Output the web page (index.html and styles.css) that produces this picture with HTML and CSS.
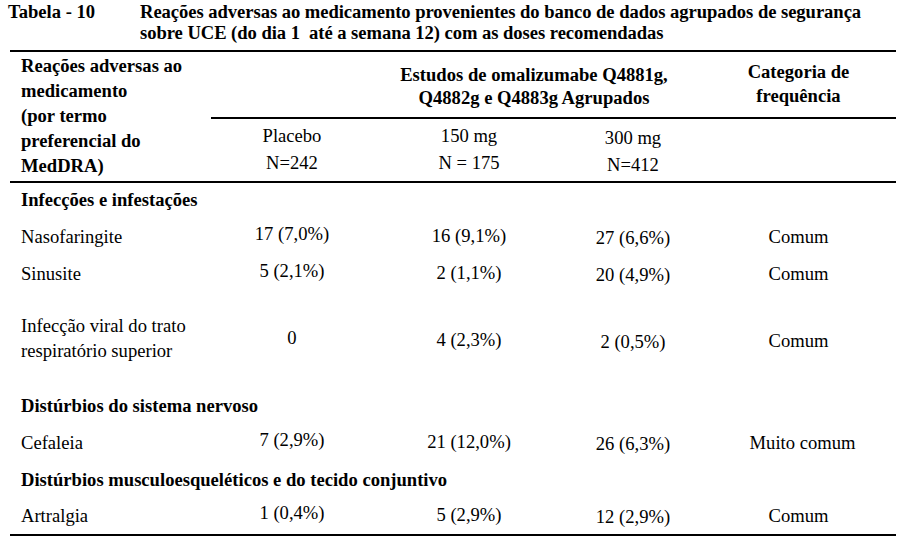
FILE: index.html
```html
<!DOCTYPE html>
<html lang="pt">
<head>
<meta charset="utf-8">
<title>Tabela 10</title>
<link rel="stylesheet" href="styles.css">
</head>
<body>
<div class="page">
  <div class="caption">
    <div class="cap-label">Tabela - 10</div>
    <div class="cap-text">Reações adversas ao medicamento provenientes do banco de dados agrupados de segurança<br>sobre UCE (do dia 1&nbsp; até a semana 12) com as doses recomendadas</div>
  </div>
  <div class="table">
    <div class="thead">
      <div class="h-term">Reações adversas ao<br>medicamento<br>(por termo<br>preferencial do<br>MedDRA)</div>
      <div class="h-studies">Estudos de omalizumabe Q4881g,<br>Q4882g e Q4883g Agrupados</div>
      <div class="h-cat">Categoria de<br>frequência</div>
      <div class="h-dose">Placebo<br>N=242</div>
      <div class="h-dose">150 mg<br>N = 175</div>
      <div class="h-dose h-low">300 mg<br>N=412</div>
      <div class="h-dose"></div>
    </div>
    <div class="tbody">
      <div class="sec sec-first">Infecções e infestações</div>
      <div class="row after-sec">
        <div class="lbl">Nasofaringite</div>
        <div class="v v2">17 (7,0%)</div>
        <div class="v v3">16 (9,1%)</div>
        <div class="v v4">27 (6,6%)</div>
        <div class="v v5">Comum</div>
      </div>
      <div class="row">
        <div class="lbl">Sinusite</div>
        <div class="v v2">5 (2,1%)</div>
        <div class="v v3">2 (1,1%)</div>
        <div class="v v4">20 (4,9%)</div>
        <div class="v v5">Comum</div>
      </div>
      <div class="row tall">
        <div class="lbl">Infecção viral do trato<br>respiratório superior</div>
        <div class="v v2">0</div>
        <div class="v v3">4 (2,3%)</div>
        <div class="v v4">2 (0,5%)</div>
        <div class="v v5">Comum</div>
      </div>
      <div class="sec sec-wide">Distúrbios do sistema nervoso</div>
      <div class="row after-sec">
        <div class="lbl">Cefaleia</div>
        <div class="v v2">7 (2,9%)</div>
        <div class="v v3">21 (12,0%)</div>
        <div class="v v4">26 (6,3%)</div>
        <div class="v v5 v-wide">Muito comum</div>
      </div>
      <div class="sec">Distúrbios musculoesqueléticos e do tecido conjuntivo</div>
      <div class="row last">
        <div class="lbl">Artralgia</div>
        <div class="v v2">1 (0,4%)</div>
        <div class="v v3">5 (2,9%)</div>
        <div class="v v4">12 (2,9%)</div>
        <div class="v v5">Comum</div>
      </div>
    </div>
  </div>
</div>
</body>
</html>
```

FILE: styles.css
```css
* {
  box-sizing: border-box;
}

body {
  margin: 0;
  background: #ffffff;
  color: #000000;
  font-family: "Liberation Serif", "Times New Roman", serif;
  font-size: 18.6px;
}

.page {
  padding-top: 1px;
  width: 901px;
}

.caption {
  display: flex;
  font-weight: bold;
  line-height: 21px;
}

.cap-label {
  width: 140px;
  padding-left: 8px;
  flex: none;
}

.cap-text {
  white-space: nowrap;
  letter-spacing: -0.05px;
}

.table {
  margin: 7px 0 0 10px;
  width: 886px;
  border-top: 2px solid #000;
  border-bottom: 2px solid #000;
}

.thead,
.row {
  display: grid;
  grid-template-columns: 201px 162px 192px 136px 195px;
}

.thead {
  grid-template-rows: 67px 62px;
  border-bottom: 2px solid #000;
}

.h-term {
  grid-row: 1 / span 2;
  font-weight: bold;
  line-height: 25px;
  padding: 1px 0 0 11px;
}

.h-studies {
  grid-column: 2 / span 3;
  font-weight: bold;
  line-height: 23px;
  padding: 11px 0 0 156px;
  text-align: center;
  border-bottom: 2px solid #000;
}

.h-cat {
  grid-column: 5;
  font-weight: bold;
  line-height: 24px;
  padding-top: 7.5px;
  text-align: center;
  border-bottom: 2px solid #000;
}

.h-dose {
  line-height: 27px;
  padding-top: 3px;
  text-align: center;
}

.h-low {
  padding-top: 5px;
}

.sec {
  font-weight: bold;
  line-height: 25px;
  padding: 11px 0 0 11px;
}

.sec-first {
  padding-top: 4px;
}

.sec-wide {
  padding-top: 30px;
}

.row {
  line-height: 25px;
  padding-top: 11px;
  align-items: start;
}

.row.after-sec {
  padding-top: 12px;
}

.row.tall {
  padding-top: 26px;
}

.row.last {
  padding-bottom: 5px;
}

.lbl {
  padding-left: 11px;
}

.v {
  text-align: center;
}

.v2 {
  margin-top: -3px;
}

.v3 {
  margin-top: -1px;
}

.v4 {
  margin-top: 1px;
}

.v-wide {
  padding-left: 8px;
}

.tall .v {
  padding-top: 15px;
}
```
